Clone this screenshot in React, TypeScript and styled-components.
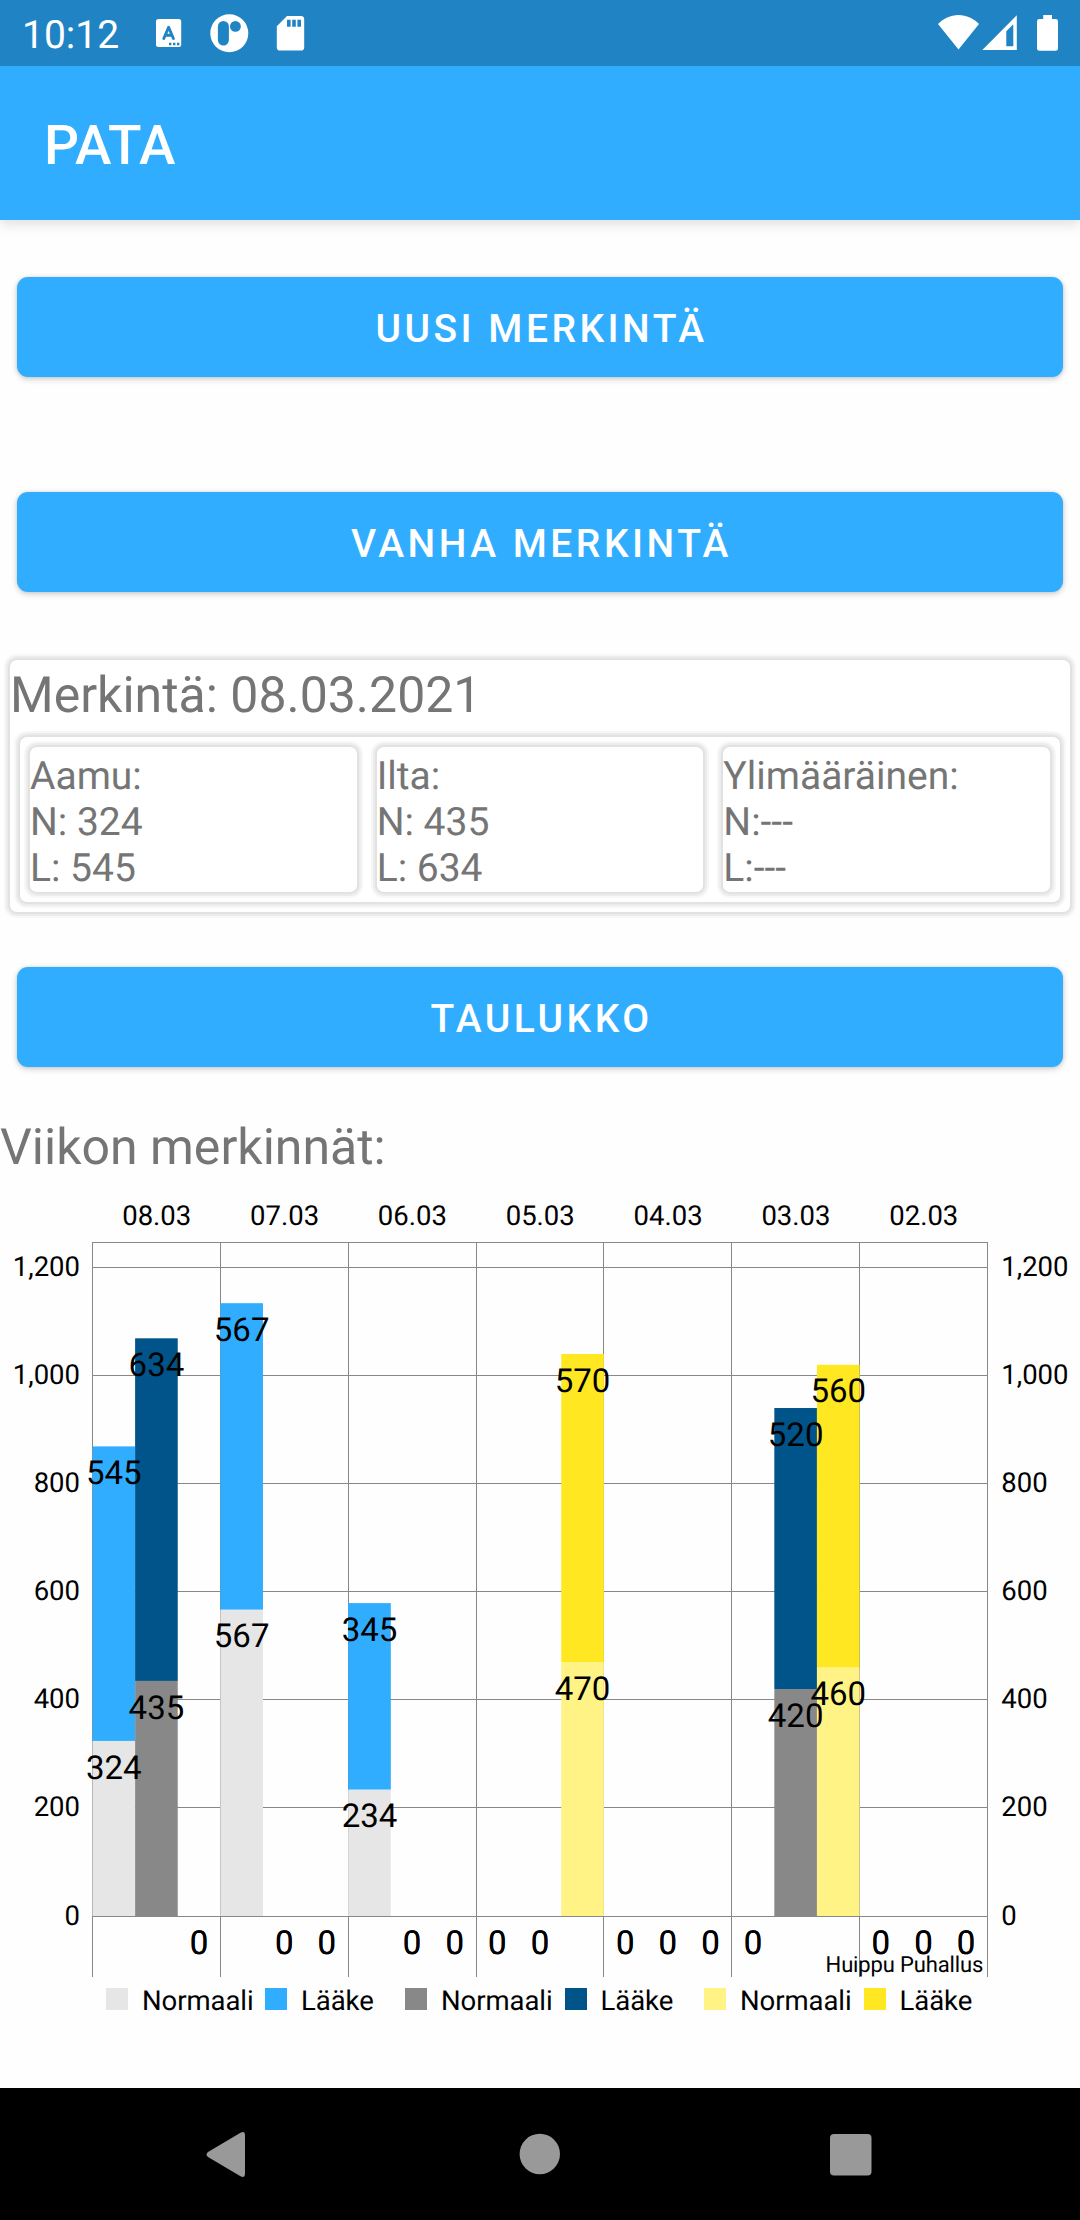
import React from 'react';
import styled, { createGlobalStyle } from 'styled-components';

const GlobalStyle = createGlobalStyle`
  * { box-sizing: border-box; }
  body { margin: 0; background: #fff; }
  body, button, text { font-family: Roboto, "Liberation Sans", sans-serif; }
`;

const Screen = styled.div`
  display: flex;
  flex-direction: column;
  width: 1080px;
  height: 2220px;
  overflow: hidden;
  background: #fefefe;
  color: #757575;
  text-rendering: geometricPrecision;
`;

const StatusBar = styled.header`
  display: flex;
  justify-content: space-between;
  flex: none;
  height: 66px;
  padding-left: 22px;
  background: #2083c4;
  color: #fff;
`;

const StatusGroup = styled.div`
  display: flex;
`;

const Clock = styled.span`
  width: 118px;
  font-size: 39px;
  line-height: 70px;
`;

const AppBar = styled.div`
  display: flex;
  align-items: center;
  flex: none;
  height: 154px;
  padding-left: 44px;
  background: #30adff;
  color: #fff;
  box-shadow: 0 4px 12px rgba(0, 0, 0, 0.13);
  clip-path: inset(0 0 -20px 0);
`;

const AppTitle = styled.h1`
  margin: 0;
  font-size: 55px;
  font-weight: 500;
  line-height: 64px;
  padding-top: 6px;
`;

const Content = styled.main`
  display: flex;
  flex-direction: column;
  flex: 1;
  min-height: 0;
  padding-top: 57px;
`;

const ActionButton = styled.button<{ $gap: number }>`
  flex: none;
  height: 100px;
  margin: 0 17px ${(p) => p.$gap}px;
  padding: 4px 0 0 3px;
  border: 0;
  border-radius: 11px;
  background: #30adff;
  color: #fff;
  font-size: 39px;
  font-weight: 500;
  line-height: 46px;
  letter-spacing: 0.0893em;
  box-shadow: 0 2px 6px rgba(0, 0, 0, 0.2), 0 0 3px rgba(0, 0, 0, 0.1);
`;

const Card = styled.div`
  border-radius: 7px;
  background: #fff;
  box-shadow: 0 0 0 2px #e2e2e2, 0 0 0 4px #ececec, 0 0 0 6px #f7f7f7;
`;

const EntryCard = styled(Card)`
  flex: none;
  height: 252px;
  margin: 0 10px 55px;
  padding: 7px 10px 10px;
`;

const EntryTitle = styled.div`
  height: 70px;
  margin-left: -10px;
  font-size: 50px;
  line-height: 58px;
`;

const PeriodRow = styled(Card)`
  display: grid;
  grid-template-columns: repeat(3, 1fr);
  gap: 20px;
  height: 165px;
  padding: 10px;
`;

const PeriodCard = styled(Card)`
  padding-top: 6px;
  font-size: 39px;
  line-height: 46px;
`;

const SectionTitle = styled.h2`
  flex: none;
  height: 61px;
  margin: 0;
  font-size: 50px;
  font-weight: 400;
  line-height: 58px;
`;

const Chart = styled.svg`
  display: block;
  flex: none;
`;

const Legend = styled.div`
  display: flex;
  padding: 5px 0 0 106px;
  color: #000;
  font-size: 27.5px;
  line-height: 26px;
  letter-spacing: -0.05px;
`;

const LegendItem = styled.div<{ $width: number }>`
  display: flex;
  flex: none;
  gap: 14px;
  width: ${(p) => p.$width}px;
`;

const Swatch = styled.span<{ $color: string }>`
  width: 22px;
  height: 22px;
  background: ${(p) => p.$color};
`;

const NavBar = styled.nav`
  flex: none;
  height: 132px;
  background: #000;
`;

const BLUE = '#30adff';
const NAVY = '#005489';
const LIGHT = '#e6e6e6';
const GRAY = '#888888';
const PALE = '#fff386';
const YELLOW = '#ffe822';

const periods = [
  { name: 'Aamu:', normal: 'N: 324', medicine: 'L: 545' },
  { name: 'Ilta:', normal: 'N: 435', medicine: 'L: 634' },
  { name: 'Ylimääräinen:', normal: 'N:---', medicine: 'L:---' },
];

type Pair = [number, number];
const days: { date: string; values: [Pair, Pair, Pair] }[] = [
  { date: '08.03', values: [[324, 545], [435, 634], [0, 0]] },
  { date: '07.03', values: [[567, 567], [0, 0], [0, 0]] },
  { date: '06.03', values: [[234, 345], [0, 0], [0, 0]] },
  { date: '05.03', values: [[0, 0], [0, 0], [470, 570]] },
  { date: '04.03', values: [[0, 0], [0, 0], [0, 0]] },
  { date: '03.03', values: [[0, 0], [420, 520], [460, 560]] },
  { date: '02.03', values: [[0, 0], [0, 0], [0, 0]] },
];
const series = [[LIGHT, BLUE], [GRAY, NAVY], [PALE, YELLOW]];

const legend = [
  { label: 'Normaali', color: LIGHT, width: 159 },
  { label: 'Lääke', color: BLUE, width: 140 },
  { label: 'Normaali', color: GRAY, width: 159.5 },
  { label: 'Lääke', color: NAVY, width: 139.5 },
  { label: 'Normaali', color: PALE, width: 159.5 },
  { label: 'Lääke', color: YELLOW, width: 140 },
];

/* Plot geometry, in the chart's own pixels. */
const LEFT = 92.5;
const RIGHT = 987.4;
const TOP = 62;
const BOTTOM = 797;
const ZERO = 736;
const UNIT = 0.5404;
const DAY = (RIGHT - LEFT) / 7;
const BAR = DAY / 3;
const yOf = (v: number) => ZERO - v * UNIT;

function WeekChart() {
  const ticks = [0, 200, 400, 600, 800, 1000, 1200];
  const bars = days.flatMap((d, i) =>
    d.values.map(([n, l], j) => ({ n, l, j, x: LEFT + i * DAY + j * BAR })),
  );
  return (
    <Chart width="1080" height="803" viewBox="0 0 1080 803">
      <g fill={GRAY} shapeRendering="crispEdges">
        <rect x={92} y={TOP} width={896} height={1} />
        {ticks.map((t) => (
          <rect key={t} x={92} y={Math.floor(yOf(t))} width={896} height={1} />
        ))}
        {Array.from({ length: 8 }, (_, i) => (
          <rect key={i} x={Math.floor(LEFT + i * DAY)} y={TOP} width={1} height={BOTTOM - TOP} />
        ))}
      </g>
      {bars.map((b, i) =>
        b.n > 0 ? (
          <g key={i}>
            <rect x={b.x} y={yOf(b.n)} width={BAR} height={b.n * UNIT} fill={series[b.j][0]} />
            <rect x={b.x} y={yOf(b.n + b.l)} width={BAR} height={b.l * UNIT} fill={series[b.j][1]} />
          </g>
        ) : null,
      )}
      <g fontSize="33" textAnchor="middle" fill="#000">
        {bars.map((b, i) => (
          <g key={i}>
            <text x={b.x + BAR / 2} y={yOf(b.n) + 37.6}>{b.n}</text>
            <text x={b.x + BAR / 2} y={yOf(b.n + b.l) + 37.6}>{b.l}</text>
          </g>
        ))}
      </g>
      <g fontSize="27.5" fill="#000">
        {days.map((d, i) => (
          <text key={d.date} x={LEFT + (i + 0.5) * DAY + 0.3} y={44.5} textAnchor="middle">{d.date}</text>
        ))}
        {ticks.map((t) => (
          <g key={t}>
            <text x={80} y={yOf(t) + 8.5} textAnchor="end">{t.toLocaleString('en-US')}</text>
            <text x={1001.3} y={yOf(t) + 8.5}>{t.toLocaleString('en-US')}</text>
          </g>
        ))}
      </g>
      <text x={825.6} y={791.7} fontSize="22" letterSpacing="-0.15" fill="#000">Huippu Puhallus</text>
    </Chart>
  );
}

function NotificationIcons() {
  return (
    <svg width="180" height="66" viewBox="140 0 180 66" fill="#fff">
      <rect x="156" y="19" width="25.2" height="28" rx="2.5" />
      <path d="M163.8 38.5 L168.6 27.3 L173.4 38.5 M165.3 35.2 H171.9" fill="none" stroke="#2083c4" strokeWidth="2.9" strokeLinecap="round" strokeLinejoin="round" />
      <path d="M169 42.8h2.4v2.4h-2.4zM173 42.8h2.4v2.4H173zM177 42.8h2.4v2.4H177z" fill="#2083c4" />
      <circle cx="229.3" cy="33.2" r="19" />
      <rect x="217.9" y="21" width="11" height="24.6" rx="5.5" fill="#2083c4" />
      <circle cx="235.4" cy="26.4" r="5.4" fill="#2083c4" />
      <path d="M287 16h13.8a3.4 3.4 0 0 1 3.4 3.4v27.8a3.4 3.4 0 0 1-3.4 3.4h-20.6a3.4 3.4 0 0 1-3.4-3.4V26.2z" />
      <path d="M287 19.7h3.6v7H287zM292.2 19.7h3.6v7h-3.6zM297.4 19.7h3.6v7h-3.6z" fill="#2083c4" />
    </svg>
  );
}

function SystemIcons() {
  return (
    <svg width="150" height="66" viewBox="930 0 150 66" fill="#fff">
      <path d="M938 23.9 C943.5 18.5 950.5 15 958.5 15 S973.5 18.5 979 23.9 L958.5 49.5 Z" />
      <path fillRule="evenodd" d="M982.3 50 L1016.8 15.3 V50 Z M1006.3 31.2 V46.2 H1013.3 V24.2 Z" />
      <path d="M1043.2 15h8.8v4h3.6a2.4 2.4 0 0 1 2.4 2.4v27a2.4 2.4 0 0 1-2.4 2.4h-16.2a2.4 2.4 0 0 1-2.4-2.4v-27a2.4 2.4 0 0 1 2.4-2.4h3.8z" />
    </svg>
  );
}

export default function App() {
  return (
    <>
      <GlobalStyle />
      <Screen>
        <StatusBar>
          <StatusGroup>
            <Clock>10:12</Clock>
            <NotificationIcons />
          </StatusGroup>
          <SystemIcons />
        </StatusBar>
        <AppBar>
          <AppTitle>PATA</AppTitle>
        </AppBar>
        <Content>
          <ActionButton $gap={115}>UUSI MERKINTÄ</ActionButton>
          <ActionButton $gap={68}>VANHA MERKINTÄ</ActionButton>
          <EntryCard>
            <EntryTitle>Merkintä: 08.03.2021</EntryTitle>
            <PeriodRow>
              {periods.map((p) => (
                <PeriodCard key={p.name}>
                  <div>{p.name}</div>
                  <div>{p.normal}</div>
                  <div>{p.medicine}</div>
                </PeriodCard>
              ))}
            </PeriodRow>
          </EntryCard>
          <ActionButton $gap={52}>TAULUKKO</ActionButton>
          <SectionTitle>Viikon merkinnät:</SectionTitle>
          <WeekChart />
          <Legend>
            {legend.map((item, i) => (
              <LegendItem key={i} $width={item.width}>
                <Swatch $color={item.color} />
                {item.label}
              </LegendItem>
            ))}
          </Legend>
        </Content>
        <NavBar>
          <svg width="1080" height="132" viewBox="0 0 1080 132" fill="#999">
            <path d="M208 64 L240.5 44.8 Q245 42.5 245 47.5 V85.5 Q245 90.5 240.5 88.2 L208 69 Q205 66.5 208 64 Z" />
            <circle cx="539.8" cy="66" r="20.2" />
            <rect x="830" y="46" width="41.5" height="41.5" rx="4" />
          </svg>
        </NavBar>
      </Screen>
    </>
  );
}
